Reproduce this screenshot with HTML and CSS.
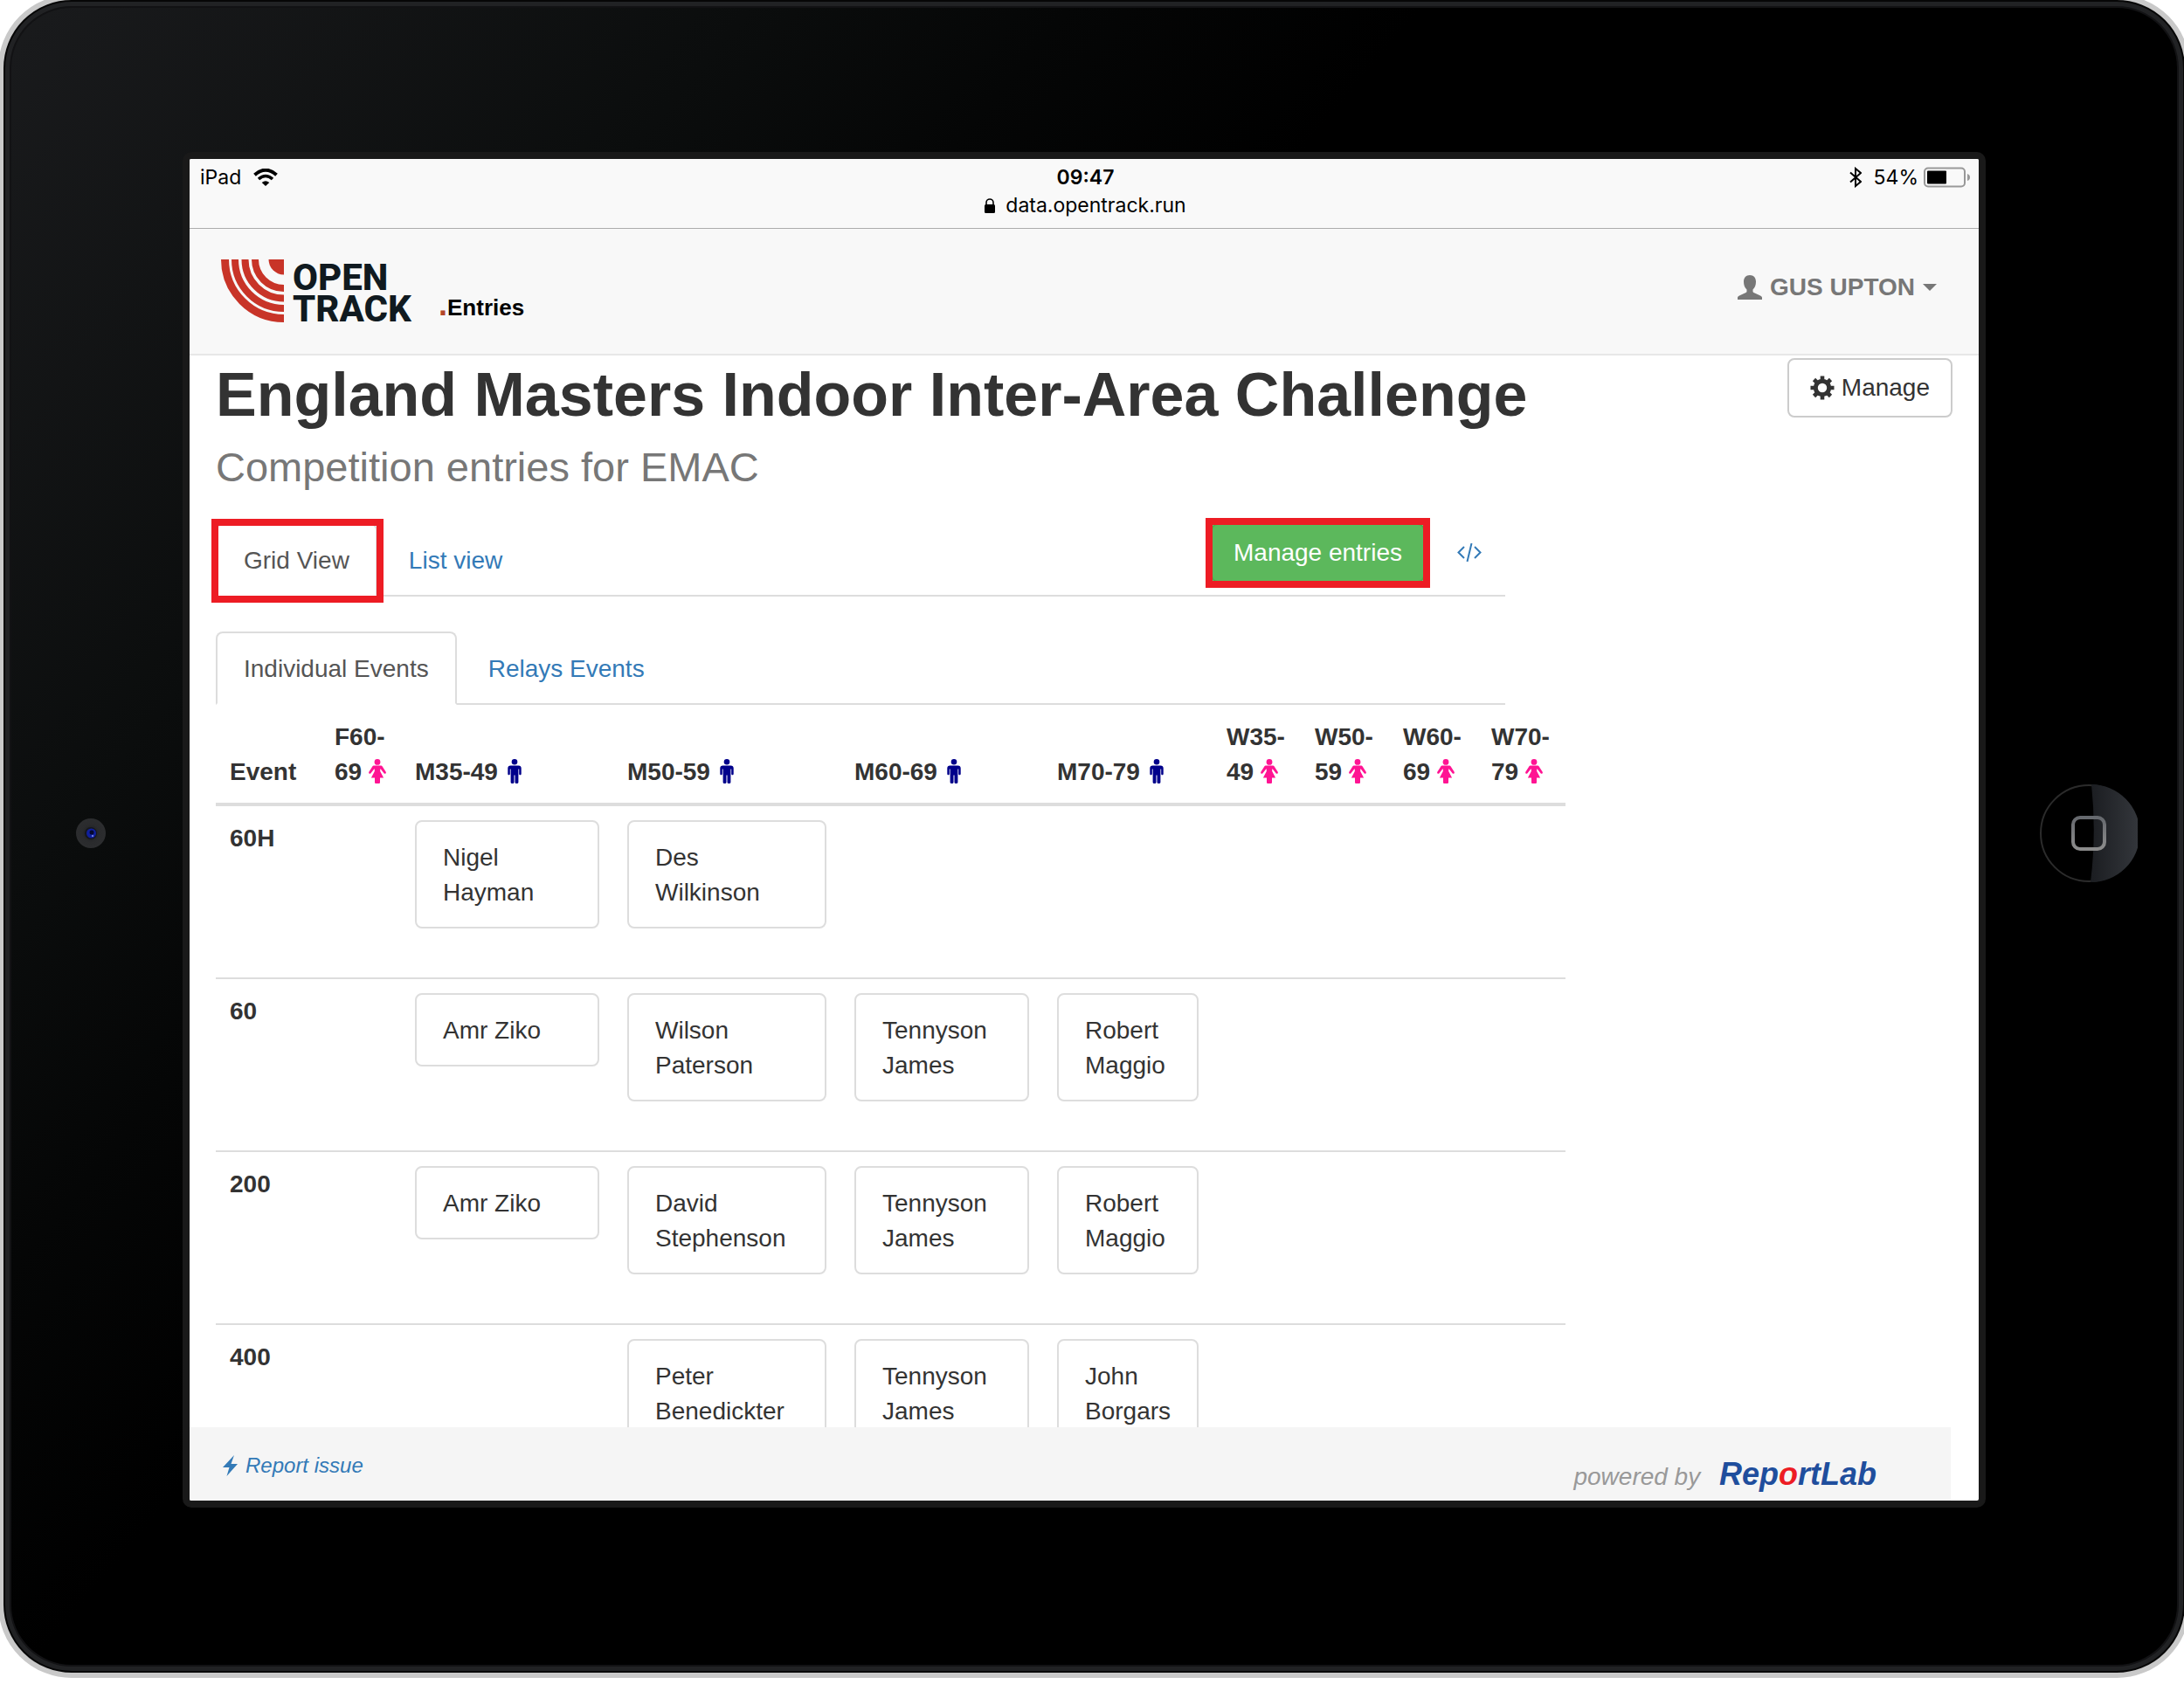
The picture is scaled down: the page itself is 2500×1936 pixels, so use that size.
FILE: index.html
```html
<!DOCTYPE html>
<html lang="en">
<head>
<meta charset="utf-8">
<title>England Masters Indoor Inter-Area Challenge</title>
<link rel="stylesheet" href="styles.css">
</head>
<body>
<svg class="symbols" aria-hidden="true">
  <symbol id="female" viewBox="0 0 20 28">
    <circle cx="10" cy="3.400" r="3.400"/>
    <path d="M6.500 7.500h7c1.200 0 1.900.5 2.500 1.400l3.700 5.900c.8 1.500-1 2.800-2.200 1.500L13.800 11.500l-.6 0 0 2.500 3.900 7.500H13v5.200c0 1-.8 1.300-1.500 1.300h-3c-.7 0-1.500-.3-1.500-1.300v-5.200H2.900L6.800 14l0-2.500-.6 0L2.500 16.300C1.300 17.600-.5 16.300.3 14.800L4 8.900c.6-.9 1.300-1.400 2.500-1.400z"/>
  </symbol>
  <symbol id="male" viewBox="3 0 22 28">
    <circle cx="14" cy="3.300" r="3.300"/>
    <path d="M9.500 7.500h9c2 0 3.200 1.200 3.200 3v6.500c0 1.800-2.500 1.800-2.500 0v-5.500h-.8v15c0 2-3.900 2-3.900 0V18.500h-1v8c0 2-3.900 2-3.900 0v-15h-.8V17c0 1.800-2.500 1.800-2.500 0v-6.500c0-1.800 1.200-3 3.200-3z"/>
  </symbol>
</svg>
<div class="device">
  <div class="side side-camera">
    <svg class="camera" viewBox="0 0 34 34" aria-hidden="true">
      <defs><radialGradient id="lens"><stop offset="0" stop-color="#1a1b20"/><stop offset=".6" stop-color="#2a2b2d"/><stop offset="1" stop-color="#2c2d2f"/></radialGradient></defs>
      <circle cx="17" cy="17" r="17" fill="url(#lens)"/>
      <circle cx="17" cy="17" r="7" fill="#15171c"/>
      <circle cx="17.500" cy="17" r="5.500" fill="#10209c"/>
      <circle cx="18" cy="16" r="2.500" fill="#05082e"/>
      <circle cx="19" cy="20" r="1" fill="#8d9af5"/>
    </svg>
  </div>

  <div class="screen">
    <header class="status">
      <div class="status-left">
        <span>iPad</span>
        <svg class="wifi" viewBox="0 0 28 20" aria-hidden="true">
          <path d="M1.500 7.200Q14-3.800 26.500 7.200" fill="none" stroke="#000" stroke-width="4"/>
          <path d="M6 12Q14 5 22 12" fill="none" stroke="#000" stroke-width="3.600"/>
          <path d="M9.700 16Q14 12.300 18.300 16L14 20z"/>
        </svg>
      </div>
      <div class="status-mid">
        <span class="clock">09:47</span>
        <span class="address">
          <svg class="lock" viewBox="0 0 12 17" aria-hidden="true"><rect y="7" width="12" height="10" rx="1.500"/><path d="M2 8V5a4 4 0 0 1 8 0v3" fill="none" stroke="#000" stroke-width="1.600"/></svg>
          data.opentrack.run
        </span>
      </div>
      <div class="status-right">
        <svg class="bluetooth" viewBox="0 0 14 24" aria-hidden="true"><path d="M1 6.500L13 17 7 22V2l6 5L1 17.500" fill="none" stroke="#000" stroke-width="2"/></svg>
        <span>54%</span>
        <svg class="battery" viewBox="0 0 54 24" aria-hidden="true"><rect x="1" y="1.500" width="46" height="21" rx="4" fill="none" stroke="#999" stroke-width="2"/><rect x="4" y="4.500" width="22" height="15" rx="1"/><path d="M50 8q3 1 3 4t-3 4z" fill="#999"/></svg>
      </div>
    </header>

    <nav class="navbar">
      <a class="brand" href="#">
        <svg class="mark" viewBox="0 0 72 72" aria-hidden="true">
          <g fill="none" stroke="#c83428">
            <path d="M4.500 0A67.500 67.500 0 0 0 72 67.500" stroke-width="9"/>
            <path d="M16 0A56 56 0 0 0 72 56" stroke-width="8"/>
            <path d="M27.500 0A44.500 44.500 0 0 0 72 44.500" stroke-width="8"/>
            <path d="M39 0A33 33 0 0 0 72 33" stroke-width="8"/>
          </g>
          <path d="M54.500 0H72V17.500A17.500 17.500 0 0 1 54.500 0z" fill="#c83428"/>
        </svg>
        <span class="wordmark">OPEN<br>TRACK</span>
        <span class="section"><span class="dot">.</span>Entries</span>
      </a>
      <button class="user" type="button">
        <svg class="icon" viewBox="0 0 28 28" aria-hidden="true"><path d="M14 0c4.500 0 7 3 7 7.500 0 4-1.200 7-3.500 9v2c0 1 .6 1.300 1.500 1.700l6 2.700c2.300 1 3 1.700 3 3V28H0v-2.100c0-1.300.7-2 3-3l6-2.700c.9-.4 1.500-.7 1.500-1.700v-2C8.200 14.500 7 11.500 7 7.500 7 3 9.500 0 14 0z"/></svg>
        GUS UPTON
        <span class="caret"></span>
      </button>
    </nav>

    <main class="page">
      <div class="heading">
        <h1>England Masters Indoor Inter-Area Challenge</h1>
        <button class="btn btn-default" type="button">
          <svg class="icon" viewBox="0 0 28 28" aria-hidden="true">
            <g stroke="#333"><circle cx="14" cy="14" r="7.700" fill="none" stroke-width="5"/>
            <path d="M14 .5V5M14 23v4.500M.5 14H5M23 14h4.500M4.500 4.500l3 3M20.500 20.500l3 3M23.500 4.500l-3 3M7.500 20.500l-3 3" stroke-width="4.600"/></g>
          </svg>
          Manage
        </button>
      </div>
      <div class="column">
        <h2>Competition entries for EMAC</h2>
        <div class="tabs">
          <a class="tab active marked" href="#grid">Grid View</a>
          <a class="tab" href="#list">List view</a>
          <div class="actions">
            <button class="btn btn-success marked" type="button">Manage entries</button>
            <a class="code" href="#embed" aria-label="Embed code">
              <svg class="icon" viewBox="0 0 28 22" aria-hidden="true"><path d="M8 4L1.500 10.500 8 17M20 4l6.500 6.500L20 17M16.500 0l-5 21" fill="none" stroke="#337ab7" stroke-width="2"/></svg>
            </a>
          </div>
        </div>
        <div class="tabs">
          <a class="tab active" href="#individual">Individual Events</a>
          <a class="tab" href="#relays">Relays Events</a>
        </div>
        <table class="entries">
          <colgroup><col class="c-event"><col class="c-f60"><col class="c-m35"><col class="c-m50"><col class="c-m60"><col class="c-m70"><col class="c-w"><col class="c-w"><col class="c-w"><col class="c-w"></colgroup>
          <thead>
            <tr>
              <th scope="col">Event</th>
              <th scope="col">F60-69 <svg class="female"><use href="#female"/></svg></th>
              <th scope="col">M35-49 <svg class="male"><use href="#male"/></svg></th>
              <th scope="col">M50-59 <svg class="male"><use href="#male"/></svg></th>
              <th scope="col">M60-69 <svg class="male"><use href="#male"/></svg></th>
              <th scope="col">M70-79 <svg class="male"><use href="#male"/></svg></th>
              <th scope="col">W35-49 <svg class="female"><use href="#female"/></svg></th>
              <th scope="col">W50-59 <svg class="female"><use href="#female"/></svg></th>
              <th scope="col">W60-69 <svg class="female"><use href="#female"/></svg></th>
              <th scope="col">W70-79 <svg class="female"><use href="#female"/></svg></th>
            </tr>
          </thead>
          <tbody>
            <tr><th scope="row">60H</th><td></td><td><div class="entry">Nigel Hayman</div></td><td><div class="entry">Des Wilkinson</div></td><td></td><td></td><td></td><td></td><td></td><td></td></tr>
            <tr><th scope="row">60</th><td></td><td><div class="entry">Amr Ziko</div></td><td><div class="entry">Wilson Paterson</div></td><td><div class="entry">Tennyson James</div></td><td><div class="entry">Robert Maggio</div></td><td></td><td></td><td></td><td></td></tr>
            <tr><th scope="row">200</th><td></td><td><div class="entry">Amr Ziko</div></td><td><div class="entry">David Stephenson</div></td><td><div class="entry">Tennyson James</div></td><td><div class="entry">Robert Maggio</div></td><td></td><td></td><td></td><td></td></tr>
            <tr><th scope="row">400</th><td></td><td></td><td><div class="entry">Peter Benedickter</div></td><td><div class="entry">Tennyson James</div></td><td><div class="entry">John Borgars</div></td><td></td><td></td><td></td><td></td></tr>
          </tbody>
        </table>
      </div>
    </main>

    <footer class="footer">
      <a class="report" href="#report">
        <svg class="bolt" viewBox="0 0 18 24" aria-hidden="true"><path d="M13 0L0 14h7.500L4.500 24 17 10H9.500z"/></svg>
        Report issue
      </a>
      <p class="powered">powered by <a class="lab" href="#">Rep<span class="red">o</span>rtLab</a></p>
    </footer>
  </div>

  <div class="side side-home">
    <button class="home" type="button" aria-label="Home">
      <svg viewBox="0 0 112 112" aria-hidden="true">
        <defs>
          <linearGradient id="shine"><stop offset="0" stop-color="#1b1d21"/><stop offset="1" stop-color="#34373c"/></linearGradient>
          <linearGradient id="square" x2="0" y2="1"><stop offset="0" stop-color="#66696e"/><stop offset="1" stop-color="#8c8c8c"/></linearGradient>
        </defs>
        <circle cx="56" cy="56" r="55" fill="#000" stroke="#2b2b2b" stroke-width="2"/>
        <path d="M59 0a56 56 0 0 1-1 112Q65 56 59 0z" fill="url(#shine)"/>
        <rect x="38" y="38" width="36" height="36" rx="8" fill="none" stroke="url(#square)" stroke-width="4"/>
      </svg>
    </button>
  </div>
</div>
</body>
</html>
```
FILE: styles.css
```css
* { box-sizing: border-box; }

body {
  margin: 0;
  height: 100vh;
  padding-bottom: 15px;
  display: flex;
  flex-direction: column;
  overflow: hidden;
  background: #fff;
  color: #333;
  font: 28px/40px "Liberation Sans", Arial, sans-serif;
}

h1, h2, p { margin: 0; }
a { color: #337ab7; text-decoration: none; }
button { font: inherit; cursor: pointer; }
svg { display: block; flex: none; }
.symbols { position: absolute; width: 0; height: 0; }

/* tablet body */
.device {
  flex: 1;
  min-height: 0;
  margin: -6px -7px 0 -2px;
  padding: 174px 0 189px;
  display: grid;
  grid-template-columns: 205px 1fr 228px;
  grid-template-rows: minmax(0, 1fr);
  border: 6px solid #c9c9c9;
  border-radius: 84px;
  background: linear-gradient(130deg, #1a1b1d 0, #0b0d0d 660px, #050606 940px, #000 1250px);
  box-shadow: inset 0 0 0 2px #060606, inset 0 0 0 7px #212224, inset 0 0 0 9px #121214;
}
.side {
  display: flex;
  align-items: center;
  justify-content: center;
  padding-top: 8px;
}
.side-camera { padding-right: 6px; }
.side-home { padding-left: 8px; }
.camera { width: 34px; height: 34px; }
.home { width: 112px; height: 112px; padding: 0; border: 0; border-radius: 50%; background: none; }

.screen {
  display: flex;
  flex-direction: column;
  min-width: 0;
  border: 8px solid #191919;
  border-radius: 10px;
  background: #fff;
  overflow: hidden;
}

/* status bar */
.status {
  display: grid;
  grid-template-columns: 1fr auto 1fr;
  height: 80px;
  padding: 5px 9px 0 12px;
  border-bottom: 1px solid #acacac;
  background: #f9f9f9;
  color: #000;
  font: 23px/32px Inter, sans-serif;
}
.status-left, .status-right { display: flex; align-items: center; height: 32px; }
.status-left { gap: 14px; }
.status-right { justify-content: flex-end; }
.status-mid { display: flex; flex-direction: column; align-items: center; }
.clock { font-weight: 600; }
.address { display: flex; align-items: center; gap: 12px; }
.wifi { width: 28px; height: 20px; }
.lock { width: 12px; height: 17px; }
.bluetooth { width: 14px; height: 24px; margin-right: 14px; }
.battery { width: 54px; height: 24px; margin-left: 6px; }

/* site header */
.navbar {
  display: flex;
  justify-content: space-between;
  align-items: flex-start;
  height: 145px;
  padding: 35px 48px 0 36px;
  border-bottom: 2px solid #e7e7e7;
  background: #f8f8f8;
}
.brand { display: flex; align-items: flex-start; color: #000; }
.mark { width: 72px; height: 72px; }
.wordmark {
  width: 177px;
  padding: 3px 0 0 10px;
  color: #101a20;
  font: 800 42px/36px Roboto, sans-serif;
}
.section { padding-top: 34px; font-weight: bold; font-size: 26px; line-height: 36px; }
.dot { color: #b4472a; font-size: 36px; }
.user {
  display: flex;
  align-items: center;
  gap: 9px;
  padding: 12px 0 0;
  border: 0;
  background: none;
  color: #777;
  font-weight: bold;
}
.user .icon { width: 28px; height: 28px; fill: #777; }
.caret { border: 8px solid transparent; border-top-color: #777; border-bottom: 0; }

/* page */
.page { flex: 1; min-height: 0; overflow: hidden; }
.heading {
  display: flex;
  justify-content: space-between;
  align-items: flex-start;
  padding: 3px 30px 0;
}
h1 { padding-top: 3px; font-size: 70px; line-height: 79px; white-space: nowrap; }
h2 { padding: 17px 0 38px; color: #777; font-weight: normal; font-size: 47px; line-height: 52px; }
.column { width: 75%; padding: 0 30px; }

.btn {
  display: flex;
  align-items: center;
  gap: 8px;
  padding: 12px 24px;
  border: 2px solid #ccc;
  border-radius: 8px;
  white-space: nowrap;
}
.btn .icon { width: 28px; height: 28px; }
.btn-default { background: #fff; color: #333; }
.btn-success { border-color: #4cae4c; background: #5cb85c; color: #fff; }

.tabs {
  display: flex;
  align-items: flex-start;
  gap: 4px;
  margin-bottom: 40px;
  border-bottom: 2px solid #ddd;
}
.tabs + .tabs { margin-bottom: 0; }
.tab {
  margin-bottom: -2px;
  padding: 21px 30px 19px;
  border: 2px solid transparent;
  border-radius: 8px 8px 0 0;
}
.tab.active { border-color: #ddd #ddd #fff; background: #fff; color: #555; }
.actions { display: flex; align-items: center; gap: 10px; margin-left: auto; }
.code { display: flex; justify-content: center; width: 82px; }
.code .icon { width: 28px; height: 22px; }

/* red highlight laid over a control */
.marked { position: relative; }
.marked::after { content: ""; position: absolute; inset: -8px; border: 8px solid #ed1c24; }
.tab.marked::after { inset: -7px -9px -9px -7px; }

.entries { width: 1545px; table-layout: fixed; border-collapse: separate; border-spacing: 0; }
.c-event { width: 120px; }
.c-f60 { width: 92px; }
.c-m35 { width: 243px; }
.c-m50 { width: 260px; }
.c-m60 { width: 232px; }
.c-m70 { width: 194px; }
.c-w { width: 101px; }
.entries th, .entries td { padding: 16px; text-align: left; vertical-align: top; }
.entries th { padding: 17px 16px 15px; }
.entries thead th { border-bottom: 4px solid #ddd; vertical-align: bottom; }
.entries tbody tr + tr > * { border-top: 2px solid #ddd; }
.entries svg { display: inline-block; height: 28px; vertical-align: -4px; }
.female { width: 20px; fill: #ff1493; }
.male { width: 22px; fill: #00008b; }
.entry { margin-bottom: 40px; padding: 21px 30px 19px; border: 2px solid #ddd; border-radius: 8px; }
.entries td:nth-child(6) .entry { padding-right: 20px; }

.footer {
  display: flex;
  justify-content: space-between;
  height: 84px;
  margin-right: 32px;
  padding: 24px 85px 0 38px;
  background: #f5f5f5;
  font-style: italic;
}
.report { display: flex; align-items: center; gap: 8px; height: 40px; font-size: 24px; }
.bolt { width: 18px; height: 24px; fill: #337ab7; }
.powered { padding-top: 10px; color: #999; }
.lab { margin-left: 14px; color: #1f4e9d; font-weight: bold; font-size: 36px; }
.red { color: #ed1c24; }
```
